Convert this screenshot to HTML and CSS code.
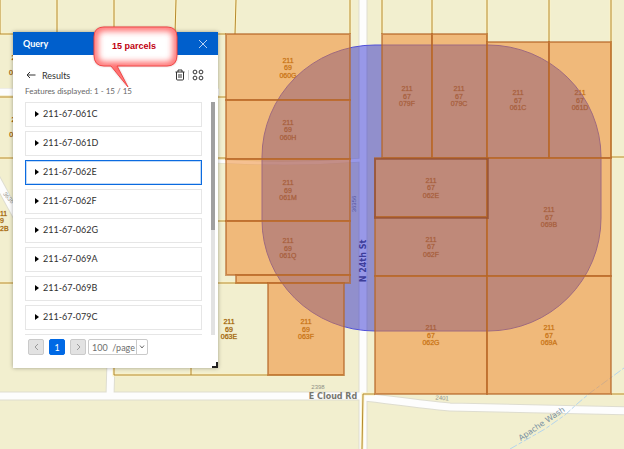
FILE: index.html
```html
<!DOCTYPE html>
<html lang="en">
<head>
<meta charset="utf-8">
<title>Query</title>
<link rel="stylesheet" href="styles.css">
</head>
<body>
<main class="app">
  <svg class="map" viewBox="0 0 624 449" preserveAspectRatio="xMinYMin slice" role="img" aria-label="Parcel map">
    <!-- roads: casing, then surface -->
    <g class="road-casing">
      <path d="M363 -5V455M-5 396H362M111 360L110 396"/>
      <path d="M363 397C385 399 415 404 450 407L630 411"/>
      <path class="narrow" d="M-5 92H20M210 92H219"/>
      <path d="M-4 178L20 222"/>
      <path class="lane" d="M210 161C250 163 300 165 363 160"/>
    </g>
    <g class="road">
      <path d="M363 -5V455M-5 396H362M111 360L110 396"/>
      <path d="M363 397C385 399 415 404 450 407L630 411"/>
      <path class="narrow" d="M-5 92H20M210 92H219"/>
      <path d="M-4 178L20 222"/>
      <path class="lane" d="M210 161C250 163 300 165 363 160"/>
    </g>

    <!-- wash -->
    <path class="wash" d="M510 449L545 429L565 415L577 404L590 393L624 368"/>

    <!-- lot lines -->
    <g class="lot-halo"><use href="#lots"/></g>
    <g class="lot-line">
      <path id="lots" d="M0 0V34M57 0V34M114 0V34M176 0L175 34M236 0L235 34M350 0V34M382 0V34M432 0V34M487 0V42M549 0V42M611 0V157M0 34H226M0 97H14M218 97H226M0 158H14M218 158H226M218 221H226M0 283H14M218 283H268M114 360V375H344M191 360V375M611 157H624M611 394H624M375 394H363L362 449"/>
    </g>

    <!-- parcel numbers -->
    <g class="apn">
      <text x="288" y="63">211<tspan x="288" dy="7">69</tspan><tspan x="288" dy="8">060G</tspan></text>
      <text x="288" y="125">211<tspan x="288" dy="7">69</tspan><tspan x="288" dy="8">060H</tspan></text>
      <text x="288" y="185">211<tspan x="288" dy="8">69</tspan><tspan x="288" dy="7">061M</tspan></text>
      <text x="288" y="243">211<tspan x="288" dy="8">69</tspan><tspan x="288" dy="7">061Q</tspan></text>
      <text x="407" y="91">211<tspan x="407" dy="8">67</tspan><tspan x="407" dy="7">079F</tspan></text>
      <text x="459" y="91">211<tspan x="459" dy="8">67</tspan><tspan x="459" dy="7">079C</tspan></text>
      <text x="518" y="95">211<tspan x="518" dy="8">67</tspan><tspan x="518" dy="7">061C</tspan></text>
      <text x="580" y="95">211<tspan x="580" dy="8">67</tspan><tspan x="580" dy="7">061D</tspan></text>
      <text x="431" y="183">211<tspan x="431" dy="7">67</tspan><tspan x="431" dy="8">062E</tspan></text>
      <text x="431" y="242">211<tspan x="431" dy="7">67</tspan><tspan x="431" dy="8">062F</tspan></text>
      <text x="549" y="212">211<tspan x="549" dy="8">67</tspan><tspan x="549" dy="7">069B</tspan></text>
      <text x="431" y="330">211<tspan x="431" dy="8">67</tspan><tspan x="431" dy="7">062G</tspan></text>
      <text x="549" y="330">211<tspan x="549" dy="8">67</tspan><tspan x="549" dy="7">069A</tspan></text>
      <text x="306" y="324">211<tspan x="306" dy="8">69</tspan><tspan x="306" dy="7">063F</tspan></text>
      <text x="229" y="324">211<tspan x="229" dy="8">69</tspan><tspan x="229" dy="7">063E</tspan></text>
      <text class="edge" x="0" y="216">11<tspan x="0" dy="7">9</tspan><tspan x="0" dy="8">2B</tspan></text>
      <text x="17" y="60">211<tspan x="17" dy="15">060F</tspan></text>
      <text x="17" y="122">211<tspan x="17" dy="15">061L</tspan></text>
    </g>

    <!-- street names and block numbers -->
    <g class="block">
      <text x="318" y="389">2398</text>
      <text x="442" y="400" transform="rotate(4 442 400)">2401</text>
      <text transform="translate(356 204) rotate(-90)">36356</text>
      <text transform="translate(7 199) rotate(50)">3636</text>
    </g>
    <text class="street" x="333" y="399">E Cloud Rd</text>
    <text class="street dark" transform="translate(366 261) rotate(-90)">N 24th St</text>
    <text class="water" transform="translate(543 426) rotate(-34)">Apache Wash</text>

    <!-- buffer around the selected parcel -->
    <path class="buffer" d="M375 45H488A113 112 0 0 1 601 157V218A113 113 0 0 1 488 331H375A113 111 0 0 1 262 220V157A113 112 0 0 1 375 45Z"/>

    <!-- parcels in the result set -->
    <g class="hit">
      <rect x="226" y="34" width="124" height="66"/>
      <rect x="226" y="100" width="124" height="59"/>
      <rect x="226" y="159" width="124" height="62"/>
      <rect x="226" y="221" width="124" height="54"/>
      <rect x="236" y="275" width="114" height="8"/>
      <rect x="268" y="283" width="76" height="92"/>
      <rect x="382" y="34" width="50" height="124"/>
      <rect x="432" y="34" width="55" height="124"/>
      <rect x="487" y="42" width="62" height="116"/>
      <rect x="549" y="42" width="62" height="116"/>
      <rect x="375" y="158" width="112" height="59"/>
      <rect x="375" y="217" width="112" height="59"/>
      <rect x="487" y="158" width="124" height="118"/>
      <rect x="375" y="276" width="112" height="118"/>
      <rect x="487" y="276" width="124" height="118"/>
    </g>
    <rect class="selected" x="375" y="159" width="113" height="59"/>
  </svg>

  <section class="panel" aria-label="Query">
    <header class="panel-head">
      <h1>Query</h1>
      <button class="icon-btn close" type="button" aria-label="Close">
        <svg width="10" height="10" viewBox="0 0 10 10"><path d="M1 1L9 9M9 1L1 9"/></svg>
      </button>
    </header>
    <div class="panel-body">
      <div class="toolbar">
        <button class="icon-btn" type="button" aria-label="Back">
          <svg width="10" height="8" viewBox="0 0 10 8"><path d="M9.5 4H1M4 1L1 4L4 7"/></svg>
        </button>
        <h2>Results</h2>
        <button class="icon-btn" type="button" aria-label="Clear results">
          <svg width="10" height="12" viewBox="0 0 10 12"><path d="M.5 3H9.5M3 3V1H7V3M1.5 3V10Q1.5 11 2.5 11H7.5Q8.5 11 8.5 10V3M4 5V9M6 5V9"/></svg>
        </button>
        <span class="rule"></span>
        <button class="icon-btn" type="button" aria-label="Actions">
          <svg width="12" height="12" viewBox="0 0 12 12"><circle cx="3" cy="3" r="1.9"/><circle cx="9" cy="3" r="1.9"/><circle cx="3" cy="9" r="1.9"/><circle cx="9" cy="9" r="1.9"/></svg>
        </button>
      </div>
      <p class="count">Features displayed: 1 - 15 / 15</p>
      <div class="scroller">
        <ul class="results">
          <li><button class="result" type="button">211-67-061C</button></li>
          <li><button class="result" type="button">211-67-061D</button></li>
          <li><button class="result current" type="button">211-67-062E</button></li>
          <li><button class="result" type="button">211-67-062F</button></li>
          <li><button class="result" type="button">211-67-062G</button></li>
          <li><button class="result" type="button">211-67-069A</button></li>
          <li><button class="result" type="button">211-67-069B</button></li>
          <li><button class="result" type="button">211-67-079C</button></li>
          <li class="peek"></li>
        </ul>
        <div class="track"><div class="thumb"></div></div>
      </div>
      <nav class="pager" aria-label="Pages">
        <button class="page" type="button" disabled aria-label="Previous page">
          <svg width="5" height="8" viewBox="0 0 5 8"><path d="M4 1L1 4L4 7"/></svg>
        </button>
        <button class="page active" type="button">1</button>
        <button class="page" type="button" disabled aria-label="Next page">
          <svg width="5" height="8" viewBox="0 0 5 8"><path d="M1 1L4 4L1 7"/></svg>
        </button>
        <span class="size">
          <select aria-label="Results per page"><option>100 &nbsp;/page</option></select>
          <svg width="6" height="4" viewBox="0 0 6 4"><path d="M1 .5L3 3L5 .5"/></svg>
        </span>
      </nav>
    </div>
    <span class="grip"></span>
  </section>

  <svg class="callout" width="90" height="66" viewBox="0 0 90 66">
    <defs>
      <filter id="soft" x="-20%" y="-20%" width="140%" height="140%"><feGaussianBlur stdDeviation="3"/></filter>
      <filter id="drop" x="-20%" y="-20%" width="140%" height="140%"><feGaussianBlur stdDeviation="1"/></filter>
      <path id="bubble" d="M13 3H76Q86 3 86 13V31Q86 42 76 42H26L37 63L20 42H13Q3 42 3 31V13Q3 3 13 3Z"/>
      <clipPath id="inside"><use href="#bubble"/></clipPath>
    </defs>
    <use class="callout-shadow" href="#bubble" filter="url(#drop)"/>
    <use class="callout-fill" href="#bubble"/>
    <g clip-path="url(#inside)"><use class="callout-glow" href="#bubble" filter="url(#soft)"/></g>
    <use class="callout-edge" href="#bubble"/>
    <text class="callout-text" x="43" y="25">15 parcels</text>
  </svg>
</main>
</body>
</html>
```
FILE: styles.css
```css
* {
  box-sizing: border-box;
}

body {
  margin: 0;
  font-family: Lato, "Liberation Sans", sans-serif;
  font-size: 9px;
  color: #333;
}

.app {
  position: relative;
  min-height: 100vh;
  overflow: hidden;
  background: #f2efcf;
}

/* Map */
.map {
  display: block;
  width: 100%;
  height: 100vh;
}

.map text {
  font-family: "Liberation Sans", sans-serif;
  text-anchor: middle;
}

.road-casing,
.road,
.lot-halo,
.lot-line,
.wash {
  fill: none;
}

.road-casing { stroke: #deddd0; stroke-width: 9px; }
.road { stroke: #fdfdfd; stroke-width: 7px; }
.road-casing .lane { stroke-width: 4px; }
.road .lane { stroke-width: 3px; }
.road-casing .narrow { stroke-width: 8px; }

.wash {
  stroke: #b5d5ec;
  stroke-width: 1px;
  stroke-dasharray: 8 2 4 2;
}

.lot-halo { stroke: #fbf3c8; stroke-width: 3px; }
.lot-line { stroke: #b4882c; stroke-width: 1px; }

.map .apn {
  font-size: 7px;
  fill: #a06000;
  stroke: #a06000;
  stroke-opacity: 0.5;
}

.apn text { stroke-width: 0.5px; }
.map .apn .edge { text-anchor: start; }

.map .block { font-size: 6px; fill: #8f8f86; }

.map .street {
  font-family: "DejaVu Sans", sans-serif;
  font-size: 8px;
  font-weight: bold;
  fill: #77776f;
}

.map .street.dark { fill: #66667a; }

.map .water {
  font-family: "DejaVu Sans", sans-serif;
  font-size: 8px;
  fill: #7890a2;
}

.buffer {
  fill: rgba(0, 0, 200, 0.4);
  stroke: #5050d8;
  stroke-width: 1px;
}

.hit {
  fill: rgba(238, 131, 37, 0.5);
  stroke: rgba(180, 100, 36, 0.6);
  stroke-width: 2px;
}

.selected {
  fill: none;
  stroke: rgba(140, 74, 50, 0.6);
  stroke-width: 2px;
}

/* Query panel */
.panel {
  position: absolute;
  top: 32px;
  left: 13px;
  width: 205px;
  background: #fff;
  box-shadow: 0 0 4px rgba(0, 0, 0, 0.35);
}

.panel-head {
  display: flex;
  align-items: center;
  justify-content: space-between;
  height: 23px;
  padding: 0 10px;
  background: #005fcc;
  color: #fff;
}

h1,
h2,
p,
ul {
  margin: 0;
  padding: 0;
}

h1 {
  font-size: 9px;
  font-weight: bold;
}

h2 {
  flex: 1;
  margin-left: 3px;
  font-size: 9px;
  font-weight: normal;
}

button,
select {
  margin: 0;
  padding: 0;
  border: 0;
  background: none;
  color: inherit;
  font: inherit;
}

.icon-btn {
  display: flex;
}

.close {
  color: #b8d2f2;
}

.panel svg {
  fill: none;
  stroke: currentColor;
  stroke-width: 1px;
}

.panel-body {
  padding: 12px 3px 13px 12px;
}

.toolbar {
  display: flex;
  align-items: center;
  gap: 3px;
  height: 16px;
  padding-right: 11px;
  padding-left: 1px;
}

.rule {
  width: 1px;
  height: 10px;
  background: #d5d5d5;
}

.count {
  height: 19px;
  font-size: 8px;
  line-height: 16px;
  color: #666;
}

.scroller {
  display: flex;
  justify-content: space-between;
  height: 233px;
  overflow: hidden;
}

.results {
  flex: 1;
  margin-right: 9px;
  list-style: none;
}

.results li {
  margin-bottom: 4px;
}

.result {
  display: flex;
  align-items: center;
  gap: 4px;
  width: 100%;
  height: 25px;
  padding: 0 9px 2px;
  border: 1px solid #e6e6e6;
  color: #303030;
}

.result::before {
  content: "";
  border: solid transparent;
  border-width: 3px 0 3px 4px;
  border-left-color: #000;
}

.result.current {
  border-color: #0b6be0;
  outline: 1px solid rgba(11, 107, 224, 0.25);
  outline-offset: -2px;
}

.peek {
  height: 25px;
  border: 1px solid #e6e6e6;
}

.track {
  width: 4px;
  background: #e2e2e2;
}

.thumb {
  height: 55%;
  background: #a0a0a0;
}

.pager {
  display: flex;
  align-items: center;
  gap: 5px;
  margin-top: 4px;
  padding-left: 3px;
}

.page {
  display: flex;
  align-items: center;
  justify-content: center;
  width: 16px;
  height: 16px;
  border: 1px solid #cacaca;
  border-radius: 2px;
  background: #e2e2e2;
  color: #9a9a9a;
}

.page.active {
  border-color: #0069e5;
  background: #0069e5;
  color: #fff;
}

.size {
  display: grid;
  grid-template-columns: 1fr 11px;
  align-items: center;
  justify-items: center;
  width: 60px;
  height: 16px;
  margin-left: -3px;
  border: 1px solid #cacaca;
  border-radius: 2px;
  background: linear-gradient(#cacaca, #cacaca) right 10px top / 1px 100% no-repeat;
  color: #6e6e6e;
}

.size select {
  grid-area: 1 / 1 / 2 / 3;
  width: 100%;
  height: 14px;
  padding-left: 3px;
  appearance: none;
}

.size svg {
  grid-area: 1 / 2;
  pointer-events: none;
}

.grip {
  position: absolute;
  right: 0;
  bottom: 0;
  width: 6px;
  height: 6px;
  border: solid #222;
  border-width: 0 2px 2px 0;
}

/* Callout */
.callout {
  position: absolute;
  top: 24px;
  left: 91px;
}

.callout-shadow { fill: rgba(90, 0, 0, 0.4); }
.callout-fill { fill: #fff; }
.callout-glow { fill: none; stroke: #ff6a6a; stroke-width: 8px; }
.callout-edge { fill: none; stroke: #f24848; stroke-width: 1px; }

.callout-text {
  font-family: "Liberation Sans", sans-serif;
  font-size: 9px;
  font-weight: bold;
  text-anchor: middle;
  fill: #c00010;
}
```
